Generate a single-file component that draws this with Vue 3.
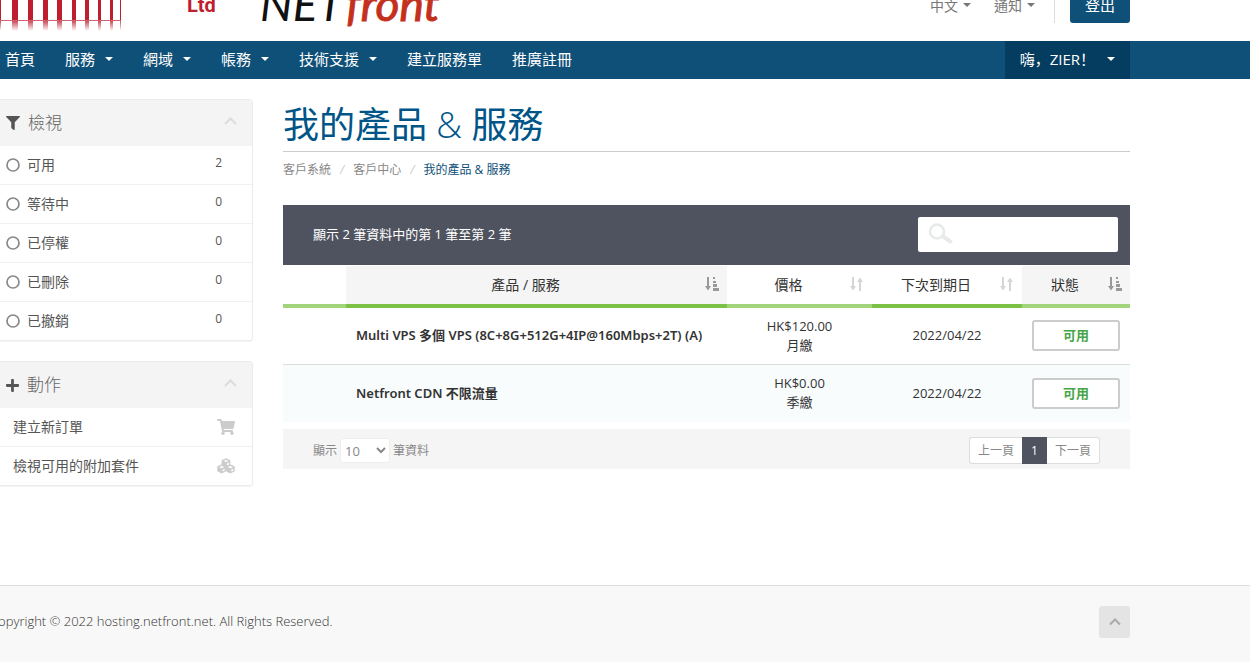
<script setup>
import { ref } from 'vue'

const menu = [
  { label: '首頁', caret: false },
  { label: '服務', caret: true },
  { label: '網域', caret: true },
  { label: '帳務', caret: true },
  { label: '技術支援', caret: true },
  { label: '建立服務單', caret: false },
  { label: '推廣註冊', caret: false }
]

const filters = [
  { label: '可用', count: 2 },
  { label: '等待中', count: 0 },
  { label: '已停權', count: 0 },
  { label: '已刪除', count: 0 },
  { label: '已撤銷', count: 0 }
]

const services = [
  { name: 'Multi VPS 多個 VPS (8C+8G+512G+4IP@160Mbps+2T) (A)', price: 'HK$120.00', cycle: '月繳', due: '2022/04/22', status: '可用' },
  { name: 'Netfront CDN 不限流量', price: 'HK$0.00', cycle: '季繳', due: '2022/04/22', status: '可用' }
]

const columns = [
  { label: '', cls: 'c-ssl', sort: '' },
  { label: '產品 / 服務', cls: 'c-product strong shaded', sort: 'asc' },
  { label: '價格', cls: 'c-price', sort: 'both' },
  { label: '下次到期日', cls: 'c-due strong', sort: 'both' },
  { label: '狀態', cls: 'c-status shaded', sort: 'asc' }
]

const bars = [[0, 1], [12, 6], [28, 5], [43, 5], [57, 5], [72, 4], [85, 4], [98, 3], [110, 3], [120, 1]]
const search = ref('')
const pageSize = ref('10')
</script>

<template>
  <div class="page">
    <header class="top">
      <div class="container top-inner">
        <a href="#" class="logo" aria-label="NETfront">
          <svg width="450" height="41" viewBox="0 0 450 41">
            <defs>
              <linearGradient id="fade" x1="0" y1="0" x2="0" y2="1">
                <stop offset="0" stop-color="#be1e2d" stop-opacity=".8" />
                <stop offset="1" stop-color="#be1e2d" stop-opacity="0" />
              </linearGradient>
            </defs>
            <g v-for="b in bars" :key="b[0]">
              <rect :x="b[0]" y="0" :width="b[1]" height="21" fill="#be1e2d" />
              <rect :x="b[0]" y="21" :width="b[1]" height="10" fill="url(#fade)" />
            </g>
            <rect x="0" y="20" width="121" height="1" fill="#d4606b" />
            <text x="187" y="12" class="ltd">Ltd</text>
            <text x="260" y="21" class="mark">NET</text>
            <text x="346" y="21" class="mark mark-red">front</text>
          </svg>
        </a>
        <div class="top-nav">
          <button type="button" class="plain">中文<i class="caret"></i></button>
          <button type="button" class="plain">通知<i class="caret"></i></button>
          <span class="divider"></span>
          <a href="#" class="logout">登出</a>
        </div>
      </div>
    </header>

    <nav class="bar">
      <div class="container bar-inner">
        <a v-for="m in menu" :key="m.label" href="#" class="bar-link">{{ m.label }}<i v-if="m.caret" class="caret"></i></a>
        <a href="#" class="bar-link account">嗨，ZIER！<i class="caret"></i></a>
      </div>
    </nav>

    <div class="container body">
      <aside class="side">
        <section class="panel">
          <h2 class="panel-head">
            <svg class="funnel" width="14" height="14" viewBox="0 0 512 512"><path fill="#555" d="M487.976 0H24.028C2.71 0-8.047 25.866 7.058 40.971L192 225.941V432c0 7.831 3.821 15.17 10.237 19.662l80 55.98C298.02 518.69 320 507.493 320 487.98V225.941l184.947-184.97C520.021 25.896 509.338 0 487.976 0z" /></svg>
            <span>檢視</span>
            <svg class="fold" width="13" height="8" viewBox="0 0 13 8"><path d="M1 7l5.500-5.500L12 7" fill="none" stroke="#ddd" stroke-width="2.200" /></svg>
          </h2>
          <a v-for="f in filters" :key="f.label" href="#" class="row">
            <svg width="14" height="14" viewBox="0 0 14 14"><circle cx="7" cy="7" r="6" fill="none" stroke="#888" stroke-width="1.700" /></svg>
            <span class="row-label">{{ f.label }}</span>
            <span class="count">{{ f.count }}</span>
          </a>
        </section>

        <section class="panel">
          <h2 class="panel-head">
            <svg width="13" height="15" viewBox="0 0 448 512"><path fill="#555" d="M416 208H272V64c0-17.670-14.330-32-32-32h-32c-17.670 0-32 14.330-32 32v144H32c-17.670 0-32 14.330-32 32v32c0 17.670 14.330 32 32 32h144v144c0 17.670 14.330 32 32 32h32c17.670 0 32-14.330 32-32V304h144c17.670 0 32-14.330 32-32v-32c0-17.670-14.330-32-32-32z" /></svg>
            <span>動作</span>
            <svg class="fold" width="13" height="8" viewBox="0 0 13 8"><path d="M1 7l5.500-5.500L12 7" fill="none" stroke="#ddd" stroke-width="2.200" /></svg>
          </h2>
          <a href="#" class="row action">
            <span class="row-label">建立新訂單</span>
            <svg width="18" height="16" viewBox="0 0 576 512"><path fill="#ccc" d="M528.120 301.319l47.273-208C578.806 78.301 567.391 64 551.990 64H159.208l-9.166-44.810C147.758 8.021 137.930 0 126.529 0H24C10.745 0 0 10.745 0 24v16c0 13.255 10.745 24 24 24h69.883l70.248 343.435C147.325 417.100 136 435.222 136 456c0 30.928 25.072 56 56 56s56-25.072 56-56c0-15.674-6.447-29.835-16.824-40h209.647C430.447 426.165 424 440.326 424 456c0 30.928 25.072 56 56 56s56-25.072 56-56c0-22.172-12.888-41.332-31.579-50.405l5.517-24.276c3.413-15.018-8.002-29.319-23.403-29.319H218.117l-6.545-32h293.145c11.206 0 20.920-7.754 23.403-18.681z" /></svg>
          </a>
          <a href="#" class="row action">
            <span class="row-label">檢視可用的附加套件</span>
            <svg width="18" height="16" viewBox="0 0 18 16">
              <g v-for="c in [[9, 4.8], [4.700, 10.900], [13.300, 10.900]]" :key="c[0]" :transform="`translate(${c[0]} ${c[1]})`">
                <path d="M0-4L3.900-2.400V2.200L0 4L-3.900 2.200V-2.400Z" fill="#ccc" stroke="#ccc" stroke-linejoin="round" />
                <path d="M-2.600-1.800L0-2.900L2.600-1.800L0-.7ZM.9 .8L3-.1V1.700L.9 2.700Z" fill="#fff" />
              </g>
            </svg>
          </a>
        </section>
      </aside>

      <main class="main">
        <h1>我的產品 <span>&amp;</span> 服務</h1>
        <nav class="crumbs">
          <a href="#">客戶系統</a><i>/</i><a href="#">客戶中心</a><i>/</i><span>我的產品 &amp; 服務</span>
        </nav>

        <div class="table-top">
          <span>顯示 2 筆資料中的第 1 筆至第 2 筆</span>
          <label class="search">
            <svg width="26" height="22" viewBox="0 0 26 22">
              <circle cx="9" cy="8.500" r="7" fill="none" stroke="#e8eaea" stroke-width="2.600" />
              <path d="M15 13.500L22.500 18.500" stroke="#e8eaea" stroke-width="4" stroke-linecap="round" />
            </svg>
            <input v-model="search" type="text" aria-label="搜尋" />
          </label>
        </div>

        <table>
          <thead>
            <tr>
              <th v-for="(c, i) in columns" :key="i" :class="c.cls">
                <div class="th">
                  <span>{{ c.label }}</span>
                  <svg v-if="c.sort === 'asc'" width="14" height="14" viewBox="0 0 14 14" fill="#999">
                    <path d="M2 0h2v9h2L3 13.500L0 9h2zM8 0h2v2H8zM8 4h3v2H8zM8 7h4v3H8zM8 11h6v3H8z" />
                  </svg>
                  <svg v-if="c.sort === 'both'" width="14" height="14" viewBox="0 0 14 14" fill="#d5d5d5">
                    <path d="M2 0h2v9h2L3 13.500L0 9h2zM9 14h2V5h2L10 .5L7 5h2z" />
                  </svg>
                </div>
              </th>
            </tr>
          </thead>
          <tbody>
            <tr v-for="s in services" :key="s.name">
              <td></td>
              <td class="name">{{ s.name }}</td>
              <td>{{ s.price }}<br />{{ s.cycle }}</td>
              <td>{{ s.due }}</td>
              <td class="status-cell"><span class="status">{{ s.status }}</span></td>
            </tr>
          </tbody>
        </table>

        <div class="table-foot">
          <label class="length">顯示
            <select v-model="pageSize">
              <option>10</option>
              <option>25</option>
              <option>50</option>
            </select>
            筆資料</label>
          <div class="pager">
            <button type="button">上一頁</button>
            <button type="button" class="current">1</button>
            <button type="button">下一頁</button>
          </div>
        </div>
      </main>
    </div>

    <footer class="footer">
      <div class="container footer-inner">
        <span>Copyright © 2022 hosting.netfront.net. All Rights Reserved.</span>
        <a href="#" class="to-top" aria-label="Top">
          <svg width="12" height="8" viewBox="0 0 12 8"><path d="M1 6.500l5-5l5 5" fill="none" stroke="#aaa" stroke-width="2" /></svg>
        </a>
      </div>
    </footer>
  </div>
</template>

<style>
body {
  background: #fff;
}
</style>

<style scoped>
* {
  box-sizing: border-box;
}
.page {
  display: flex;
  flex-direction: column;
  min-height: 100vh;
  overflow: hidden;
  font-family: "Open Sans", "Noto Sans CJK TC", sans-serif;
  font-size: 13px;
  line-height: 19px;
  color: #333;
}
a {
  color: inherit;
  text-decoration: none;
}
svg {
  display: block;
  flex: none;
}
button,
input,
select {
  font: inherit;
  color: inherit;
}
.container {
  margin: 0 120px 0 -10px;
}
.caret {
  display: inline-block;
  border: 4px solid transparent;
  border-top-color: currentColor;
  border-bottom: 0;
}

.top-inner {
  display: flex;
  justify-content: space-between;
  height: 41px;
  padding-left: 10px;
}
.ltd {
  font: 700 20px Roboto, sans-serif;
  fill: #be1e2d;
}
.mark {
  font: italic 400 46px Lato, sans-serif;
  fill: #111;
}
.mark-red {
  fill: #c4301c;
  stroke: #c4301c;
}
.top-nav {
  display: flex;
  align-items: flex-end;
  gap: 15px;
  height: 23px;
  font-size: 14px;
  color: #777;
}
.plain {
  display: flex;
  align-items: center;
  gap: 5px;
  height: 34px;
  margin-right: 8px;
  padding: 0 0 2px;
  border: 0;
  background: none;
}
.plain + .divider {
  margin-left: -4px;
}
.divider {
  width: 1px;
  height: 34px;
  background: #ddd;
}
.logout {
  height: 34px;
  padding: 7px 15px;
  border-radius: 3px;
  background: #0f5078;
  color: #fff;
  font-size: 15px;
}

.bar {
  background: #0f5078;
  color: #fff;
}
.bar-inner {
  display: flex;
}
.bar-link {
  display: flex;
  align-items: center;
  gap: 10px;
  height: 38px;
  padding: 0 15px 2px;
  font-size: 15px;
}
.account {
  gap: 12px;
  margin-left: auto;
  background: #053d60;
  font-family: "Open Sans", "Noto Sans CJK SC", sans-serif;
}

.body {
  display: flex;
  gap: 30px;
  padding-top: 20px;
}
.side {
  display: flex;
  flex: 0 0 263px;
  flex-direction: column;
  gap: 20px;
}
.panel {
  border: 1px solid #ebebeb;
  border-radius: 3px;
  box-shadow: 0 1px 1px rgba(0, 0, 0, 0.05);
}
.panel-head {
  display: flex;
  align-items: center;
  gap: 8px;
  height: 46px;
  margin: 0;
  padding: 0 15px;
  background: #f4f4f4;
  color: #666;
  font-size: 17px;
  font-weight: 300;
}
.panel-head span {
  padding-bottom: 2px;
}
.fold {
  margin: 0 0 4px auto;
}
.row {
  display: flex;
  align-items: center;
  gap: 7px;
  height: 39px;
  padding: 0 30px 0 15px;
  border-bottom: 1px solid #f1f1f1;
  color: #555;
  font-size: 14px;
}
.row:last-child {
  height: 38px;
  border-bottom: 0;
}
.row-label {
  flex: 1;
  padding-bottom: 2px;
}
.count {
  margin-bottom: 6px;
  font-size: 12px;
}
.action {
  padding: 0 17px 0 22px;
}

.main {
  flex: 1;
  min-width: 0;
}
h1 {
  margin: 0;
  padding: 4px 0;
  border-bottom: 1px solid #ccc;
  color: #058;
  font-size: 36px;
  font-weight: 400;
  line-height: 44px;
}
h1 span {
  font-weight: 300;
}
.crumbs {
  padding: 8px 0 26px;
  color: #888;
  font-size: 12px;
}
.crumbs i {
  padding: 0 9px;
  color: #ccc;
}
.crumbs span {
  color: #0f5078;
}
.table-top {
  display: flex;
  align-items: center;
  justify-content: space-between;
  height: 60px;
  padding: 0 12px 2px 30px;
  background: #4f5360;
  color: #fff;
}
.search {
  display: flex;
  align-items: center;
  width: 200px;
  height: 35px;
  padding-left: 10px;
  border-radius: 2px;
  background: #fff;
}
.search input {
  flex: 1;
  min-width: 0;
  border: 0;
  outline: 0;
  background: none;
  color: #333;
}
table {
  width: 100%;
  margin-top: 1px;
  border-collapse: collapse;
  table-layout: fixed;
}
th {
  height: 40px;
  padding: 0 0 2px;
  border-bottom: 4px solid #a2d47b;
  font-size: 14px;
  font-weight: 400;
}
.th {
  display: flex;
  align-items: center;
  padding-right: 8px;
}
.shaded {
  background: #f5f5f5;
}
.strong {
  border-bottom-color: #7cc247;
}
.th span {
  flex: 1;
}
.c-ssl {
  width: 63px;
}
.c-price {
  width: 145px;
}
.c-due {
  width: 150px;
}
.c-status {
  width: 108px;
}
td {
  height: 58px;
  padding: 0 10px;
  border-top: 1px solid #ddd;
  text-align: center;
}
tbody tr:nth-child(2) {
  background: #f8fcfd;
}
td.name {
  font-family: "Noto Sans", "Noto Sans CJK TC", sans-serif;
  font-weight: 600;
  text-align: left;
}
.status {
  display: block;
  padding: 4px 0;
  border: 2px solid #ccc;
  border-radius: 3px;
  background: #fff;
  color: #46a546;
  font-size: 13px;
  font-weight: 700;
}
.table-foot {
  display: flex;
  align-items: center;
  justify-content: space-between;
  height: 40px;
  margin-top: 7px;
  padding: 3px 30px 0;
  background: #f5f5f5;
  color: #888;
  font-size: 12px;
}
.length {
  display: flex;
  align-items: center;
  gap: 3px;
}
select {
  width: 50px;
  height: 25px;
  padding: 0;
  border: 1px solid #eee;
  border-radius: 3px;
  background: #fff;
  font-size: 13px;
}
.pager {
  display: flex;
}
.pager button {
  height: 27px;
  padding: 0 8px;
  border: 1px solid #ddd;
  background: #fff;
}
.pager button:first-child {
  border-right: 0;
  border-radius: 3px 0 0 3px;
}
.pager button:last-child {
  border-left: 0;
  border-radius: 0 3px 3px 0;
}
.pager .current {
  border-color: #4f5360;
  background: #4f5360;
  color: #fff;
}

.footer {
  flex: 0 0 77px;
  margin-top: auto;
  border-top: 1px solid #ddd;
  background: #f8f8f8;
  color: #333;
}
.footer-inner {
  display: flex;
  justify-content: space-between;
  padding-top: 20px;
}
.footer-inner span {
  font-weight: 300;
  line-height: 31px;
}
.to-top {
  display: grid;
  place-items: center;
  width: 31px;
  height: 32px;
  border-radius: 3px;
  background: #e4e4e4;
}
</style>
